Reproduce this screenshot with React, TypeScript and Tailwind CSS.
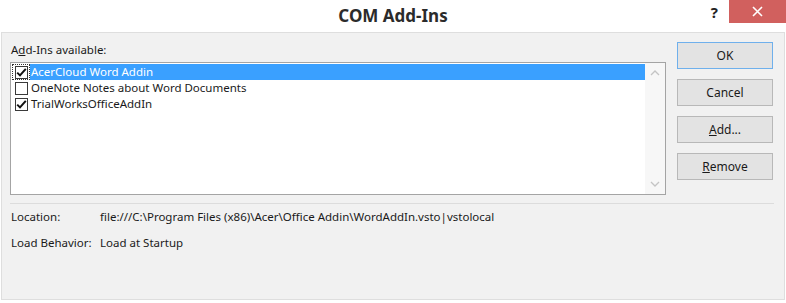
import React from "react";

const Check = ({ checked }: { checked: boolean }) => (
  <div className="w-[13px] h-[13px] border border-[#3a3a3a] bg-white flex items-center justify-center shrink-0">
    {checked && (
      <svg width="11" height="11" viewBox="0 0 11 11">
        <path d="M1.2 5.6 L4 8.4 L9.8 1.8" fill="none" stroke="#111" strokeWidth="2" />
      </svg>
    )}
  </div>
);

const Row = ({ label, checked, selected, focus }: { label: string; checked: boolean; selected?: boolean; focus?: boolean }) => (
  <div className="flex items-center h-[16px]">
    <div className={`w-[18px] h-[16px] ml-[1px] flex items-center justify-center ${focus ? "outline outline-1 outline-dotted outline-[#333] -outline-offset-1" : ""}`}>
      <Check checked={checked} />
    </div>
    <div className={`flex-1 h-[16px] pl-[1px] leading-[16px] ${selected ? "bg-[#3aa0ff] text-white" : "text-[#1a1a1a]"}`}>{label}</div>
  </div>
);

const Btn = ({ children, primary }: { children: React.ReactNode; primary?: boolean }) => (
  <div className={`h-[27px] w-[96px] flex items-center justify-center border ${primary ? "border-[#6fb0ec]" : "border-[#b8b8b8]"} bg-[#e3e3e3] text-[#1a1a1a]`}>
    {children}
  </div>
);

export default function App() {
  return (
    <div className="w-[786px] h-[303px] bg-white flex flex-col text-[11.5px] text-[#1a1a1a]" style={{ fontFamily: '"Segoe UI", "Noto Sans", sans-serif' }}>
      <div className="h-[32px] flex shrink-0">
        <div className="flex-1" />
        <div className="pt-[5px] text-[17px] font-bold text-[#2b2b2b] leading-[22px]">COM Add-Ins</div>
        <div className="flex-1 flex justify-end items-start">
          <div className="mt-[2px] mr-[11px] text-[15px] font-bold leading-[20px] text-[#222]">?</div>
          <div className="w-[57px] h-[23px] bg-[#d1605e] flex items-center justify-center">
            <svg width="11" height="11" viewBox="0 0 11 11">
              <path d="M1 1 L10 10 M10 1 L1 10" stroke="white" strokeWidth="1.6" />
            </svg>
          </div>
        </div>
      </div>
      <div className="h-[268px] mx-[1px] bg-[#f1f1f1] border border-[#dedede] flex flex-col px-[8px]">
        <div className="flex gap-[11px] pt-[9px]">
          <div className="flex-1 flex flex-col">
            <div className="h-[16px] leading-[16px] pl-[1px]">
              A<span className="underline">d</span>d-Ins available:
            </div>
            <div className="mt-[4px] h-[133px] border border-[#a4a4a4] bg-white flex">
              <div className="flex-1 pt-[1px]">
                <Row label="AcerCloud Word Addin" checked selected focus />
                <Row label="OneNote Notes about Word Documents" checked={false} />
                <Row label="TrialWorksOfficeAddIn" checked />
              </div>
              <div className="w-[20px] bg-[#f7f7f7] flex flex-col justify-between items-center py-[7px]">
                <svg width="10" height="6" viewBox="0 0 10 6">
                  <path d="M1 5 L5 1 L9 5" fill="none" stroke="#c4c4c4" strokeWidth="1.3" />
                </svg>
                <svg width="10" height="6" viewBox="0 0 10 6">
                  <path d="M1 1 L5 5 L9 1" fill="none" stroke="#c4c4c4" strokeWidth="1.3" />
                </svg>
              </div>
            </div>
          </div>
          <div className="flex flex-col gap-[10px] mr-[3px] text-[12px]">
            <Btn primary>OK</Btn>
            <Btn>Cancel</Btn>
            <Btn>
              <span className="underline">A</span>dd...
            </Btn>
            <Btn>
              <span className="underline">R</span>emove
            </Btn>
          </div>
        </div>
        <div className="mt-[8px] h-[1px] bg-[#dcdcdc] mr-[2px]" />
        <div className="flex flex-col gap-[10px] pt-[5px] pl-[1px]">
          <div className="flex h-[16px] leading-[16px]">
            <div className="w-[89px]">Location:</div>
            <div>file:///C:\Program Files (x86)\Acer\Office Addin\WordAddIn.vsto|vstolocal</div>
          </div>
          <div className="flex h-[16px] leading-[16px]">
            <div className="w-[89px]">Load Behavior:</div>
            <div>Load at Startup</div>
          </div>
        </div>
      </div>
    </div>
  );
}
